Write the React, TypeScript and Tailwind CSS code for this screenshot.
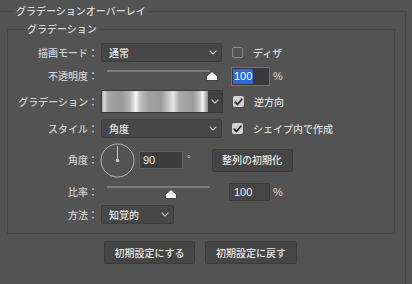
import React from "react";

const Chevron = () => (
  <svg width="8" height="5" viewBox="0 0 8 5" fill="none">
    <path d="M1 1l3 3 3-3" stroke="#c4c4c4" strokeWidth="1.1" strokeLinecap="round" strokeLinejoin="round" />
  </svg>
);

const Thumb = () => (
  <svg width="12" height="10" viewBox="0 0 12 10">
    <path d="M6 0.5L11.5 5.5V9.5H0.5V5.5Z" fill="#f4f4f4" stroke="#2e2e2e" strokeWidth="0.8" strokeLinejoin="round" />
  </svg>
);

function Checkbox({ checked, label }: { checked?: boolean; label: string }) {
  return (
    <div className="flex items-center ml-[10px] gap-[10px]">
      {checked ? (
        <div className="w-[11px] h-[11px] rounded-[2px] bg-[#d2d2d2] flex items-center justify-center">
          <svg width="9" height="8" viewBox="0 0 9 8" fill="none">
            <path d="M1.2 4.2l2.3 2.3L7.8 1.3" stroke="#2b2b2b" strokeWidth="1.8" strokeLinecap="round" strokeLinejoin="round" />
          </svg>
        </div>
      ) : (
        <div className="w-[11px] h-[11px] rounded-[2px] border border-[#8a8a8a]" />
      )}
      <span className="text-[#dcdcdc]">{label}</span>
    </div>
  );
}

function Select({ value, width }: { value: string; width: string }) {
  return (
    <div className={`${width} h-[19px] flex items-center justify-between pl-[7px] pr-[4px] bg-[#474747] border border-[#3d3d3d] rounded-[2px]`}>
      <span className="text-[#e6e6e6]">{value}</span>
      <Chevron />
    </div>
  );
}

function Label({ children }: { children: React.ReactNode }) {
  return <div className="w-[90px] shrink-0 text-right text-[#d0d0d0]">{children}</div>;
}

export default function App() {
  return (
    <div className="w-[412px] h-[284px] overflow-hidden bg-[#535353] font-['Noto_Sans_CJK_JP',sans-serif] font-medium text-[10px] leading-[12px] select-none">
      {/* outer panel */}
      <fieldset className="mt-[5px] w-[406px] h-[300px] border-t border-r border-[#474747]">
        <legend className="ml-[14px] px-[2px] text-[#d8d8d8]">グラデーションオーバーレイ</legend>

        {/* inner panel */}
        <fieldset className="mt-[6px] ml-[7px] w-[388px] h-[211px] border border-[#474747]">
          <legend className="ml-[17px] px-[2px] text-[#d8d8d8]">グラデーション</legend>

          <div className="flex flex-col gap-[3px]">
            {/* 描画モード */}
            <div className="flex items-center h-[19px] mt-[8px]">
              <Label>描画モード：</Label>
              <div className="ml-[3px] flex items-center">
                <Select value="通常" width="w-[121px]" />
                <Checkbox label="ディザ" />
              </div>
            </div>

            {/* 不透明度 */}
            <div className="flex items-center h-[20px] mt-[1px]">
              <Label>不透明度：</Label>
              <div className="ml-[3px] w-[121px] h-[20px] relative">
                <div className="absolute left-[6px] right-[12px] top-[4px] h-[2px] bg-[#7c7c7c]" />
                <div className="absolute left-[105px] top-[5px]">
                  <Thumb />
                </div>
              </div>
              <div className="ml-[9px] w-[39px] h-[19px] flex items-center pl-[1px] bg-[#3a3a3a] border border-[#3f7ad6] font-['Liberation_Sans',sans-serif] text-[11px]">
                <span className="bg-[#2c6bd0] text-white px-[1px] leading-[15px]">100</span>
              </div>
              <span className="ml-[3px] text-[#d8d8d8] font-['Liberation_Sans',sans-serif] text-[11px]">%</span>
            </div>

            {/* グラデーション */}
            <div className="flex items-center h-[23px] mt-[1px]">
              <Label>グラデーション：</Label>
              <div className="ml-[3px] flex items-center">
                <div className="flex h-[23px] border border-[#3a3a3a]">
                  <div className="w-[106px] h-full bg-[linear-gradient(90deg,#a8a8a8_0%,#d8d8d8_2%,#a4a4a4_6%,#9a9a9a_18%,#b4b4b4_26%,#f6f6f6_32%,#c0c0c0_36%,#a2a2a2_44%,#9c9c9c_56%,#c8c8c8_63%,#e6e6e6_67%,#aaaaaa_73%,#9a9a9a_86%,#c6c6c6_92%,#f4f4f4_95%,#8a8a8a_100%)]" />
                  <div className="w-[14px] h-full bg-[#424242] flex items-center justify-center">
                    <Chevron />
                  </div>
                </div>
                <Checkbox checked label="逆方向" />
              </div>
            </div>

            {/* スタイル */}
            <div className="flex items-center h-[19px] mt-[3px]">
              <Label>スタイル：</Label>
              <div className="ml-[3px] flex items-center">
                <Select value="角度" width="w-[121px]" />
                <Checkbox checked label="シェイプ内で作成" />
              </div>
            </div>

            {/* 角度 */}
            <div className="flex items-center h-[34px] mt-[2px]">
              <Label>角度：</Label>
              <div className="ml-[2px] flex items-center">
                <svg width="35" height="35" viewBox="0 0 35 35" fill="none">
                  <circle cx="17.5" cy="17.5" r="16.5" stroke="#bdbdbd" strokeWidth="0.9" />
                  <line x1="17.5" y1="17.5" x2="17.5" y2="3" stroke="#c8c8c8" strokeWidth="1" />
                  <circle cx="17.5" cy="17.5" r="1.8" fill="#c8c8c8" />
                </svg>
                <div className="ml-[4px] w-[44px] h-[18px] flex items-center pl-[3px] bg-[#3c3c3c] border border-[#5c5c5c] text-[#eeeeee] font-['Liberation_Sans',sans-serif] text-[11px]">
                  90
                </div>
                <span className="ml-[4px] self-start mt-[10px] text-[#d8d8d8] font-['Liberation_Sans',sans-serif] text-[9px]">°</span>
                <button className="ml-[21px] w-[81px] h-[23px] rounded-[2px] bg-[#454545] border border-[#3c3c3c] text-[#e6e6e6]">
                  整列の初期化
                </button>
              </div>
            </div>

            {/* 比率 */}
            <div className="flex items-center h-[18px] mt-[3px]">
              <Label>比率：</Label>
              <div className="ml-[3px] w-[121px] h-[18px] relative">
                <div className="absolute left-[6px] right-[12px] top-[3px] h-[2px] bg-[#7c7c7c]" />
                <div className="absolute left-[64px] top-[6px]">
                  <Thumb />
                </div>
              </div>
              <div className="ml-[7px] w-[41px] h-[18px] flex items-center pl-[4px] bg-[#454545] border border-[#3c3c3c] text-[#eeeeee] font-['Liberation_Sans',sans-serif] text-[11px]">
                100
              </div>
              <span className="ml-[3px] text-[#d8d8d8] font-['Liberation_Sans',sans-serif] text-[11px]">%</span>
            </div>

            {/* 方法 */}
            <div className="flex items-center h-[19px] mt-[1px]">
              <Label>方法：</Label>
              <div className="ml-[3px]">
                <Select value="知覚的" width="w-[73px]" />
              </div>
            </div>
          </div>
        </fieldset>

        {/* buttons */}
        <div className="flex gap-[10px] pl-[104px] mt-[7px]">
          <button className="w-[91px] h-[23px] rounded-[2px] bg-[#454545] border border-[#3c3c3c] text-[#e6e6e6]">
            初期設定にする
          </button>
          <button className="w-[92px] h-[23px] rounded-[2px] bg-[#454545] border border-[#3c3c3c] text-[#e6e6e6]">
            初期設定に戻す
          </button>
        </div>
      </fieldset>
    </div>
  );
}
